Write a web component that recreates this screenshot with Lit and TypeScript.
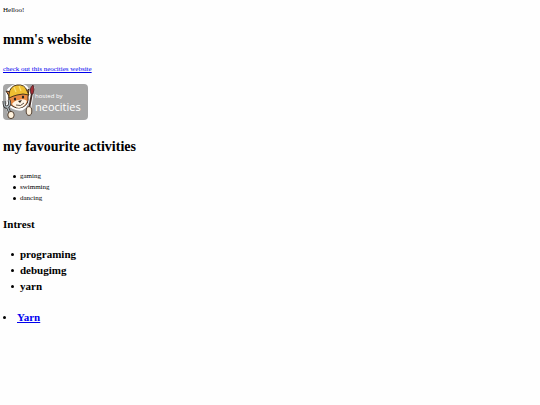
import { LitElement, html, css, svg } from "lit";
import { customElement } from "lit/decorators.js";

const badge = svg`
  <svg class="badge" viewBox="0 0 85 36" role="img" aria-label="hosted by neocities">
    <rect width="85" height="36" rx="4" fill="#a6a6a6"/>
    <g stroke="#fff" stroke-width="3" stroke-linejoin="round" fill="#fff">
      <path d="M4 8 Q9 1 16 1 Q25 1 26 10 Q25 22 19 25 Q10 26 5 19Z"/>
      <path d="M30 3 L26 29 M3 20 L8 33" fill="none"/>
    </g>
    <path d="M6 12 L3 7 L9 8 L22 8 L26 5 L25 13 Q26 20 20 23 Q13 26 7 20 Q5 17 6 12Z" fill="#e98a42" stroke="#33261c" stroke-width="1"/>
    <path d="M9 20 Q12 16 16 16 Q21 14 24 17 Q22 23 16 24 Q11 23 9 20Z" fill="#fff4e4"/>
    <path d="M6 10 Q7 2 14 1 Q22 0 24 7 L26 11 Q20 9 14 11 Q10 12 6 14Z" fill="#efbf32" stroke="#4a3519" stroke-width="1"/>
    <path d="M11 3 L13 8 M16 2 L18 7" stroke="#fbe27a" stroke-width="1.2"/>
    <ellipse cx="12" cy="15" rx="1.1" ry="1.5" fill="#222"/>
    <ellipse cx="20" cy="13" rx="1.1" ry="1.5" fill="#222"/>
    <path d="M15 17 L19 16 L17 19Z" fill="#33261c"/>
    <path d="M13 21 Q18 23 21 19" fill="none" stroke="#33261c" stroke-width=".8"/>
    <path d="M4 22 L9 34 M1 17 Q1 24 4 23 Q8 22 6 16" stroke="#333" stroke-width="3" fill="none"/>
    <path d="M4 22 L9 34 M1 17 Q1 24 4 23 Q8 22 6 16" stroke="#aeb8bd" stroke-width="1.3" fill="none"/>
    <path d="M29 9 L26 25" stroke="#402a24" stroke-width="1.8"/>
    <path d="M28 10 Q26 4 30 1 Q32 5 30 10Z" fill="#a42b32" stroke="#492328" stroke-width=".8"/>
    <ellipse cx="8" cy="31" rx="3.2" ry="3.6" fill="#fff2de" stroke="#473323" stroke-width=".9"/>
    <ellipse cx="26" cy="27" rx="2.8" ry="4.4" fill="#fff2de" stroke="#473323" stroke-width=".9"/>
    <text class="hosted" x="32" y="14">hosted by</text>
    <text class="brand" x="32" y="27">neocities</text>
  </svg>`;

@customElement("app-root")
export class AppRoot extends LitElement {
  static styles = css`
    :host {
      display: block;
      box-sizing: border-box;
      min-height: 100vh;
      padding: 5px 3px;
      background: #fefefe;
      color: #000;
      font: 7px/11px "Liberation Serif", "Times New Roman", serif;
    }
    p, h1, h2, ul { margin: 0; }
    a { color: #0000ee; }
    h1 { font-size: 14px; line-height: 22px; margin: 13px 0; }
    .logo { display: block; width: fit-content; margin: 9px 0 16px; }
    .badge { display: block; width: 85px; height: 36px; overflow: visible; }
    .hosted { font: 6px "Open Sans", sans-serif; fill: #fff; }
    .brand { font: 11px "Open Sans", sans-serif; fill: #fff; }
    ul { padding-left: 10px; list-style: none; }
    li { display: flex; align-items: center; gap: 4px; }
    li::before { content: ""; width: 3px; height: 3px; border-radius: 50%; background: #000; }
    h2 { font-size: 11px; line-height: 14px; margin: 13px 0 15px; }
    .interests { padding-left: 8px; font-size: 11px; line-height: 16px; font-weight: bold; }
    .interests li { gap: 6px; }
    .more { margin-top: 15px; padding-left: 0; }
    .more li { gap: 11px; }
  `;

  render() {
    return html`
      <p>Helloo!</p>
      <h1>mnm's website</h1>
      <p><a href="#neocities">check out this neocities website</a></p>
      <a class="logo" href="#host">${badge}</a>
      <h1>my favourite activities</h1>
      <ul>
        ${["gaming", "swimming", "dancing"].map((name) => html`<li>${name}</li>`)}
      </ul>
      <h2>Intrest</h2>
      <ul class="interests">
        ${["programing", "debugimg", "yarn"].map((name) => html`<li>${name}</li>`)}
      </ul>
      <ul class="interests more">
        <li><a href="#yarn">Yarn</a></li>
      </ul>
    `;
  }
}
